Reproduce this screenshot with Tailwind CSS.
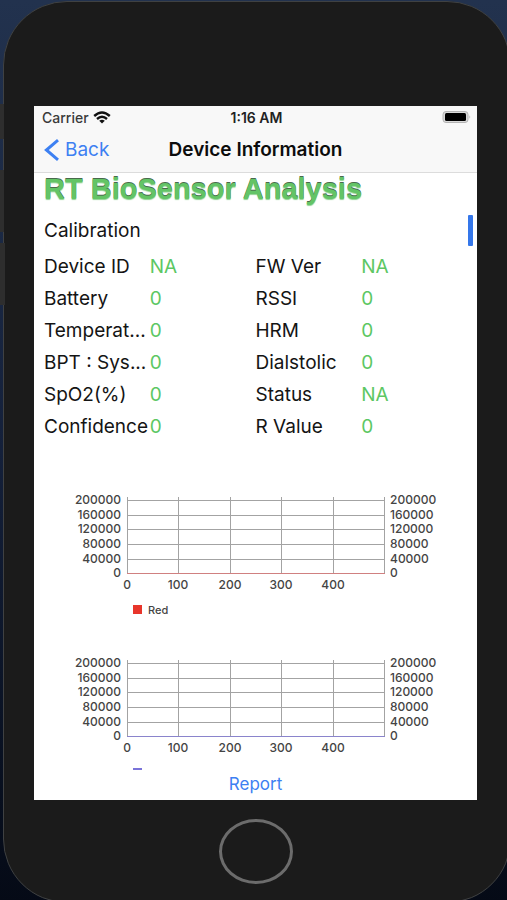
<!DOCTYPE html>
<html lang="en">
<head>
    <meta charset="UTF-8">
    <meta name="viewport" content="width=device-width, initial-scale=1.0">
    <title>Device Information</title>
    <script src="https://cdn.jsdelivr.net/npm/@tailwindcss/browser@4"></script>
</head>
<body class="bg-[#0a0f1e] font-[Inter,sans-serif] text-[#141414]">
    <div class="relative min-h-screen overflow-hidden bg-linear-to-b from-[#22324e] via-[#14203a] to-[#050a16] pl-[3px] pt-px">
        <!-- Side buttons -->
        <div class="absolute left-0 top-[104px] z-10 h-[35px] w-[4px] bg-[#2e2e2e]"></div>
        <div class="absolute left-0 top-[170px] z-10 h-[62px] w-[4px] bg-[#2e2e2e]"></div>
        <div class="absolute left-0 top-[243px] z-10 h-[62px] w-[5px] bg-[#2e2e2e]"></div>

        <!-- Phone body -->
        <div class="-mr-[4px] rounded-[64px] border border-[#3f4142] bg-[#1b1b1b] pb-[18px] pl-[30px] pr-[33px] pt-[104px]">
            <div class="relative bg-white">
                <header class="border-b border-[#dcdcdc] bg-[#f8f8f8]">
                    <div class="grid h-[22px] grid-cols-3 items-center pl-2 pr-[6px] text-[14px] font-medium">
                        <div class="flex items-center gap-1 text-[#3a3a3a]">
                            <span>Carrier</span>
                            <svg class="h-[13px] w-[18px]" viewBox="0 0 18 13" fill="none" stroke="#111" stroke-width="2.4">
                                <path d="M1.2 5 Q9 -2 16.8 5"/>
                                <path d="M4 8 Q9 3.6 14 8"/>
                                <path d="M6.2 9.8 Q9 7.6 11.8 9.8 L9 12.6 Z" fill="#111" stroke="none"/>
                            </svg>
                        </div>
                        <div class="text-center font-semibold text-[#222]">1:16 AM</div>
                        <svg class="h-[12px] w-[29px] justify-self-end" viewBox="0 0 29 12">
                            <rect x="1" y="0.5" width="25" height="11" rx="3" fill="#dadada" stroke="#b4b4b4"/>
                            <rect x="3" y="2" width="21" height="8" rx="1.5" fill="#000"/>
                            <path d="M27.5 4.2 Q29 6 27.5 7.8 Z" fill="#a8a8a8"/>
                        </svg>
                    </div>
                    <div class="grid h-[44px] grid-cols-[1fr_auto_1fr] items-center px-[10px]">
                        <a href="#" class="flex items-center gap-[6px] text-[19px] text-[#3d80f2]">
                            <svg class="h-[22px] w-[15px]" viewBox="0 0 15 22" fill="none" stroke="#3d80f2" stroke-width="3">
                                <path d="M14 1.2 L2.4 11 L14 20.8"/>
                            </svg>
                            Back
                        </a>
                        <h1 class="text-[19px] font-semibold text-[#0c0c0c]">Device Information</h1>
                    </div>
                </header>

                <main>
                    <h2 class="h-[38px] px-[10px] font-['Liberation_Sans',sans-serif] text-[29px] leading-8 font-bold text-[#63c466] [text-shadow:0_-1px_0_#4a6a4c,0_1px_1px_#8fd392]">RT BioSensor Analysis</h2>
                    <p class="px-[10px] text-[19px] leading-10">Calibration</p>
                    <div class="absolute right-[4px] top-[109px] h-[31px] w-[5px] rounded-[1px] bg-[#3577ea]"></div>

                    <dl class="grid grid-cols-4 px-[10px] text-[19px] leading-8 whitespace-nowrap">
                        <dt>Device ID</dt><dd class="text-[#5cc763]">NA</dd>
                        <dt>FW Ver</dt><dd class="text-[#5cc763]">NA</dd>
                        <dt>Battery</dt><dd class="text-[#5cc763]">0</dd>
                        <dt>RSSI</dt><dd class="text-[#5cc763]">0</dd>
                        <dt>Temperat...</dt><dd class="text-[#5cc763]">0</dd>
                        <dt>HRM</dt><dd class="text-[#5cc763]">0</dd>
                        <dt>BPT : Sys...</dt><dd class="text-[#5cc763]">0</dd>
                        <dt>Dialstolic</dt><dd class="text-[#5cc763]">0</dd>
                        <dt>SpO2(%)</dt><dd class="text-[#5cc763]">0</dd>
                        <dt>Status</dt><dd class="text-[#5cc763]">NA</dd>
                        <dt>Confidence</dt><dd class="text-[#5cc763]">0</dd>
                        <dt>R Value</dt><dd class="text-[#5cc763]">0</dd>
                    </dl>

                    <!-- Charts -->
                    <div class="h-[327px] overflow-hidden pt-[46px]">
                        <svg class="w-full" viewBox="0 0 443 163" font-size="12" font-weight="500" fill="#444">
                            <g stroke="#a3a3a3" fill="none">
                                <path d="M93 11.5H351M93 26.5H351M93 40.5H351M93 55.5H351M93 70.5H351"/>
                                <path d="M93.5 8V85M144.5 8V85M196.5 8V85M247.5 8V85M299.5 8V85M350.5 8V85"/>
                            </g>
                            <path d="M93 84.5H351" stroke="#d08080"/>
                            <g text-anchor="end">
                                <text x="87" y="15">200000</text>
                                <text x="87" y="30">160000</text>
                                <text x="87" y="44">120000</text>
                                <text x="87" y="59">80000</text>
                                <text x="87" y="74">40000</text>
                                <text x="87" y="88">0</text>
                            </g>
                            <g>
                                <text x="356" y="15">200000</text>
                                <text x="356" y="30">160000</text>
                                <text x="356" y="44">120000</text>
                                <text x="356" y="59">80000</text>
                                <text x="356" y="74">40000</text>
                                <text x="356" y="88">0</text>
                            </g>
                            <g text-anchor="middle">
                                <text x="93" y="100">0</text>
                                <text x="144" y="100">100</text>
                                <text x="196" y="100">200</text>
                                <text x="247" y="100">300</text>
                                <text x="299" y="100">400</text>
                            </g>
                            <rect x="99" y="116" width="9" height="9" fill="#e8352b"/>
                            <text x="114" y="125" font-size="11">Red</text>
                        </svg>
                        <svg class="w-full" viewBox="0 0 443 163" font-size="12" font-weight="500" fill="#444">
                            <g stroke="#a3a3a3" fill="none">
                                <path d="M93 11.5H351M93 26.5H351M93 40.5H351M93 55.5H351M93 70.5H351"/>
                                <path d="M93.5 8V85M144.5 8V85M196.5 8V85M247.5 8V85M299.5 8V85M350.5 8V85"/>
                            </g>
                            <path d="M93 84.5H351" stroke="#8a84cc"/>
                            <g text-anchor="end">
                                <text x="87" y="15">200000</text>
                                <text x="87" y="30">160000</text>
                                <text x="87" y="44">120000</text>
                                <text x="87" y="59">80000</text>
                                <text x="87" y="74">40000</text>
                                <text x="87" y="88">0</text>
                            </g>
                            <g>
                                <text x="356" y="15">200000</text>
                                <text x="356" y="30">160000</text>
                                <text x="356" y="44">120000</text>
                                <text x="356" y="59">80000</text>
                                <text x="356" y="74">40000</text>
                                <text x="356" y="88">0</text>
                            </g>
                            <g text-anchor="middle">
                                <text x="93" y="100">0</text>
                                <text x="144" y="100">100</text>
                                <text x="196" y="100">200</text>
                                <text x="247" y="100">300</text>
                                <text x="299" y="100">400</text>
                            </g>
                            <rect x="99" y="116" width="9" height="9" fill="#7a73d9"/>
                        </svg>
                    </div>

                    <button type="button" class="mx-auto block h-[30px] text-[17px] text-[#3d80f2]">Report</button>
                </main>
            </div>

            <button type="button" aria-label="Home" class="mx-auto mt-[19px] block h-[65px] w-[74px] rounded-[50%] border-[3px] border-[#6c6c6c]"></button>
        </div>
    </div>
</body>
</html>
